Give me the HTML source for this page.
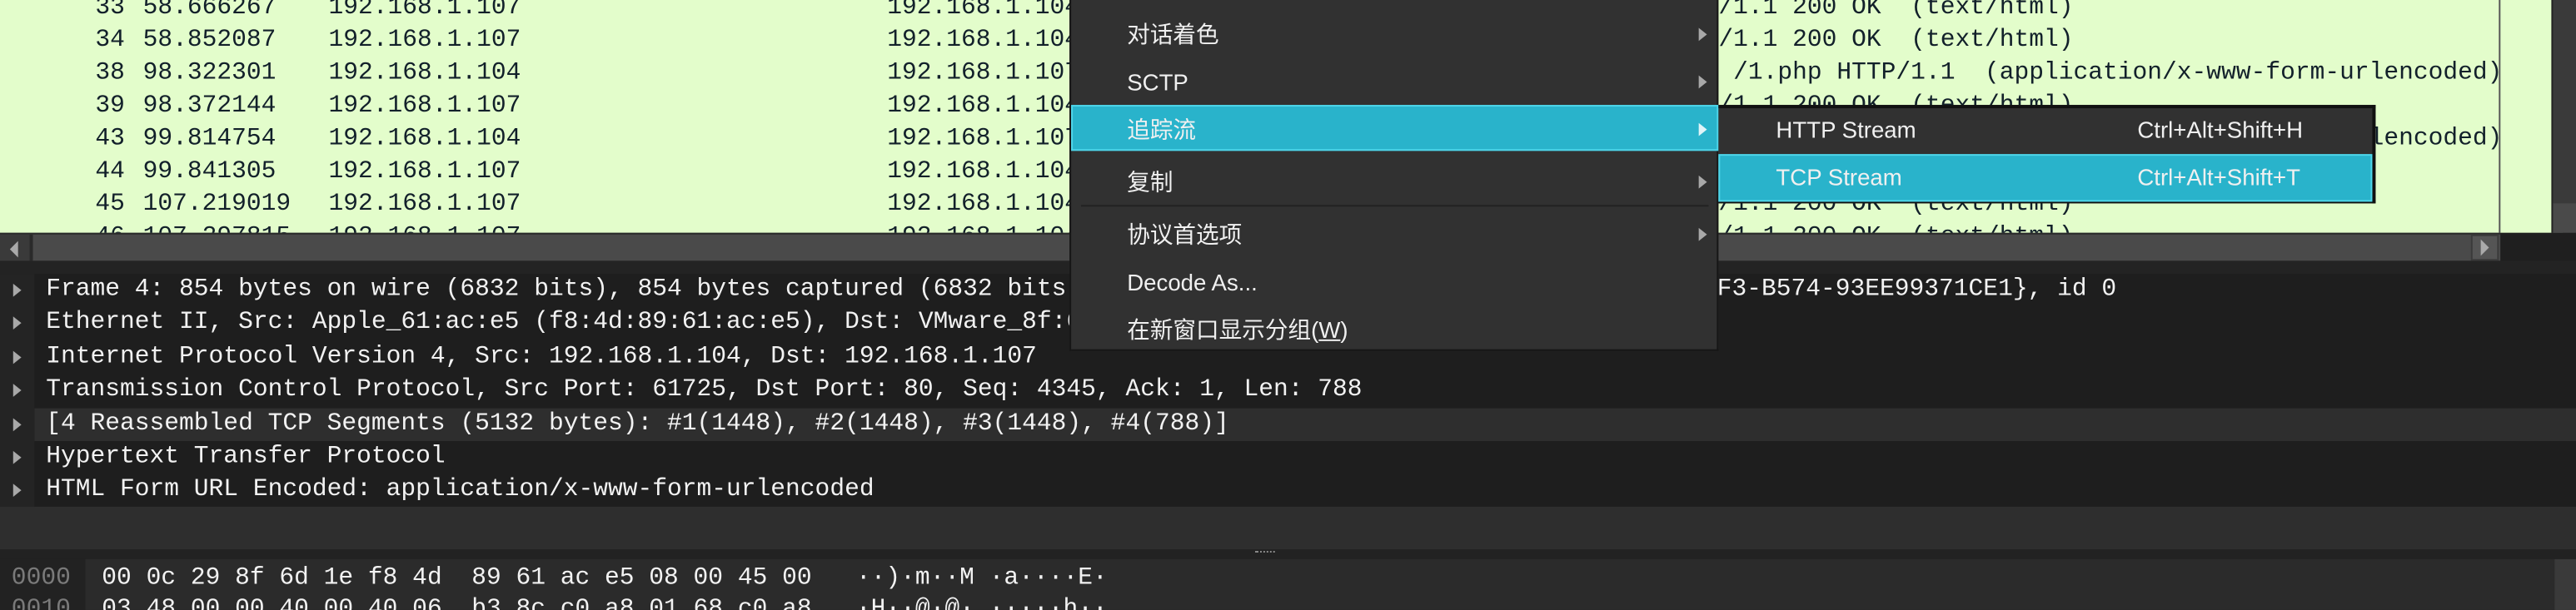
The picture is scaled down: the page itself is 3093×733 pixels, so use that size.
<!DOCTYPE html>
<html><head><meta charset="utf-8"><style>
html,body{margin:0;padding:0;background:#1e1e1e;overflow:hidden;width:3093px;height:733px}
#s{position:absolute;left:0;top:0;width:1568px;height:372px;transform:scale(1.9726,1.9704);transform-origin:0 0;overflow:hidden}
.m{font-family:"Liberation Mono",monospace;font-size:15px;white-space:pre;position:absolute;line-height:20px}
.a{position:absolute}
.sf{font-family:"Liberation Sans","Noto Sans CJK SC",sans-serif;font-size:14px;color:#f0f0f0;position:absolute;white-space:pre;line-height:20px}
.arr{position:absolute;width:0;height:0;border-top:4px solid transparent;border-bottom:4px solid transparent;border-left:5px solid #a8a8a8}
.r{position:absolute;left:0;width:1521px;height:20px;font-family:"Liberation Mono",monospace;font-size:15px;line-height:20px;white-space:pre}
.r span{position:absolute;top:0}
.n{right:1445px;text-align:right}
.t{left:87px}.sr{left:200px}.d{left:540px}.i{left:1010px}
</style></head><body><div id="s">
<div class="a" style="left:0;top:0;width:1560px;height:142px;background:#e3fdcb"></div>
<div class="a" style="left:1521px;top:0;width:1px;height:142px;background:#555"></div>
<div class="a" style="left:1553px;top:0;width:15px;height:142px;background:#3a3a3a;border-left:1px solid #222"></div>
<div class="a" style="left:1554px;top:124px;width:14px;height:18px;background:#4a4a4a"></div>
<div style="position:absolute;left:0;top:0;width:1521px;height:142px;overflow:hidden;color:#12202a">
<div class="r" style="top:-5px"><span class="n">33</span><span class="t">58.666267</span><span class="sr">192.168.1.107</span><span class="d">192.168.1.104</span><span class="i">HTTP/1.1 200 OK  (text/html)</span></div>
<div class="r" style="top:15px"><span class="n">34</span><span class="t">58.852087</span><span class="sr">192.168.1.107</span><span class="d">192.168.1.104</span><span class="i">HTTP/1.1 200 OK  (text/html)</span></div>
<div class="r" style="top:35px"><span class="n">38</span><span class="t">98.322301</span><span class="sr">192.168.1.104</span><span class="d">192.168.1.107</span><span class="i">POST /1.php HTTP/1.1  (application/x-www-form-urlencoded)</span></div>
<div class="r" style="top:55px"><span class="n">39</span><span class="t">98.372144</span><span class="sr">192.168.1.107</span><span class="d">192.168.1.104</span><span class="i">HTTP/1.1 200 OK  (text/html)</span></div>
<div class="r" style="top:75px"><span class="n">43</span><span class="t">99.814754</span><span class="sr">192.168.1.104</span><span class="d">192.168.1.107</span><span class="i">POST /1.php HTTP/1.1  (application/x-www-form-urlencoded)</span></div>
<div class="r" style="top:95px"><span class="n">44</span><span class="t">99.841305</span><span class="sr">192.168.1.107</span><span class="d">192.168.1.104</span><span class="i">HTTP/1.1 200 OK  (text/html)</span></div>
<div class="r" style="top:115px"><span class="n">45</span><span class="t">107.219019</span><span class="sr">192.168.1.107</span><span class="d">192.168.1.104</span><span class="i">HTTP/1.1 200 OK  (text/html)</span></div>
<div class="r" style="top:135px"><span class="n">46</span><span class="t">107.297815</span><span class="sr">192.168.1.107</span><span class="d">192.168.1.104</span><span class="i">HTTP/1.1 200 OK  (text/html)</span></div>
</div>
<div class="a" style="left:0;top:142px;width:1522px;height:17px;background:#4a4a4a;border-top:1px solid #2a2a2a"></div>
<div class="a" style="left:0;top:143px;width:18px;height:16px;background:#3a3a3a;border-right:2px solid #2a2a2a"></div>
<div class="a" style="left:6px;top:147px;border-top:5px solid transparent;border-bottom:5px solid transparent;border-right:5px solid #aaa;width:0;height:0"></div>
<div class="a" style="left:1504px;top:143px;width:17px;height:16px;background:#555;border:1px solid #3a3a3a;box-sizing:border-box"></div>
<div class="arr" style="left:1510px;top:146px;border-top-width:5px;border-bottom-width:5px;border-left-color:#aaa"></div>
<div class="a" style="left:1522px;top:142px;width:46px;height:17px;background:#1f1f1f"></div>
<div class="a" style="left:0;top:159px;width:1568px;height:8px;background:#232323"></div>
<div class="a" style="left:0;top:167px;width:1568px;height:142px;background:#1e1e1e"></div>
<div class="a" style="left:0;top:167px;width:21px;height:142px;background:#242424"></div>
<div class="a" style="left:21px;top:249px;width:1547px;height:20px;background:#2e2e2e"></div>
<div style="color:#f2f2f2">
<div class="m" style="left:28px;top:167px">Frame 4: 854 bytes on wire (6832 bits), 854 bytes captured (6832 bits) on interface \Device\NPF_{B7C2E6A4-C2A8-4AF3-B574-93EE99371CE1}, id 0</div>
<div class="m" style="left:28px;top:187px">Ethernet II, Src: Apple_61:ac:e5 (f8:4d:89:61:ac:e5), Dst: VMware_8f:6d:1e (00:0c:29:8f:6d:1e)</div>
<div class="m" style="left:28px;top:208px">Internet Protocol Version 4, Src: 192.168.1.104, Dst: 192.168.1.107</div>
<div class="m" style="left:28px;top:228px">Transmission Control Protocol, Src Port: 61725, Dst Port: 80, Seq: 4345, Ack: 1, Len: 788</div>
<div class="m" style="left:28px;top:249px">[4 Reassembled TCP Segments (5132 bytes): #1(1448), #2(1448), #3(1448), #4(788)]</div>
<div class="m" style="left:28px;top:269px">Hypertext Transfer Protocol</div>
<div class="m" style="left:28px;top:289px">HTML Form URL Encoded: application/x-www-form-urlencoded</div>
</div>
<div class="arr" style="left:8px;top:173px"></div>
<div class="arr" style="left:8px;top:193px"></div>
<div class="arr" style="left:8px;top:214px"></div>
<div class="arr" style="left:8px;top:234px"></div>
<div class="arr" style="left:8px;top:255px"></div>
<div class="arr" style="left:8px;top:275px"></div>
<div class="arr" style="left:8px;top:295px"></div>
<div class="a" style="left:0;top:309px;width:1568px;height:26px;background:#2e2e2e"></div>
<div class="a" style="left:0;top:335px;width:1568px;height:6px;background:#222"></div>
<div class="a" style="left:764px;top:336px;width:12px;height:2px;border-top:1px dotted #888"></div>
<div class="a" style="left:0;top:341px;width:1568px;height:31px;background:#2b2b2b"></div>
<div class="a" style="left:0;top:341px;width:52px;height:31px;background:#222"></div>
<div class="a" style="left:1555px;top:341px;width:13px;height:31px;background:#3a3a3a"></div>
<div class="m" style="left:7px;top:343px;color:#7a7a7a">0000</div>
<div class="m" style="left:7px;top:362px;color:#7a7a7a">0010</div>
<div class="m" style="left:62px;top:343px;color:#f2f2f2">00 0c 29 8f 6d 1e f8 4d  89 61 ac e5 08 00 45 00   ··)·m··M ·a····E·</div>
<div class="m" style="left:62px;top:362px;color:#f2f2f2">03 48 00 00 40 00 40 06  b3 8c c0 a8 01 68 c0 a8   ·H··@·@· ·····h··</div>
<div class="a" style="left:651px;top:0;width:395px;height:214px;background:#313131;border:1px solid #161616;border-top:none;box-sizing:border-box"></div>
<div class="sf" style="left:686px;top:11px">对话着色</div>
<div class="arr" style="left:1034px;top:17px"></div>
<div class="sf" style="left:686px;top:40px">SCTP</div>
<div class="arr" style="left:1034px;top:46px"></div>
<div class="a" style="left:652px;top:64px;width:394px;height:28px;background:#29b3cb;border:1px solid #4fd6ea;box-sizing:border-box"></div>
<div class="sf" style="left:686px;top:69px">追踪流</div>
<div class="arr" style="left:1034px;top:75px;border-left-color:#e0f4f8"></div>
<div class="sf" style="left:686px;top:101px">复制</div>
<div class="arr" style="left:1034px;top:107px"></div>
<div class="a" style="left:658px;top:125px;width:382px;height:1px;background:#222"></div>
<div class="sf" style="left:686px;top:133px">协议首选项</div>
<div class="arr" style="left:1034px;top:139px"></div>
<div class="sf" style="left:686px;top:162px">Decode As...</div>
<div class="sf" style="left:686px;top:191px">在新窗口显示分组(<u>W</u>)</div>
<div class="a" style="left:1046px;top:64px;width:400px;height:60px;background:#313131;border:2px solid #111;border-left:none;box-sizing:border-box"></div>
<div class="sf" style="left:1081px;top:69px">HTTP Stream</div>
<div class="sf" style="left:1301px;top:69px">Ctrl+Alt+Shift+H</div>
<div class="a" style="left:1046px;top:94px;width:398px;height:29px;background:#29b3cb;border:1px solid #4fd6ea;box-sizing:border-box"></div>
<div class="sf" style="left:1081px;top:98px">TCP Stream</div>
<div class="sf" style="left:1301px;top:98px">Ctrl+Alt+Shift+T</div>
</div></body></html>
